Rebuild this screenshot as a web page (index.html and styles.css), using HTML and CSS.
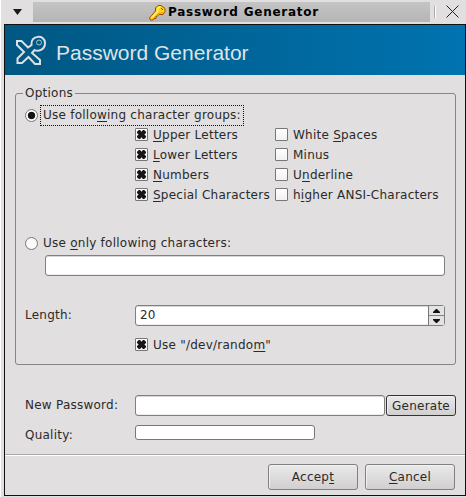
FILE: index.html
```html
<!DOCTYPE html>
<html lang="en">
<head>
<meta charset="utf-8">
<title>Password Generator</title>
<link rel="stylesheet" href="styles.css">
</head>
<body>
<div class="window">
  <div class="titlebar">
    <svg class="menu-arrow" width="10" height="6"><path d="M0 0h9L4.500 6z" fill="#1a1a1a"/></svg>
    <div class="caption">
      <svg width="17" height="17" viewBox="0 0 17 17"><path d="M9 1.500h3l4 3 0 3-2 3-4 0-2 2-1 0 0 2-2 0-1 1.500-2.500 0-1-2 6-7 0-3z" fill="#ffd51c" stroke="#a44800"/><path d="M2.500 13.500L9 7V4l2-1.500" fill="none" stroke="#fff27a" stroke-width="1.2"/><path d="M4 15l6-6 4 0" fill="none" stroke="#e89b00"/><path d="M12 4l2 2" stroke="#814000"/></svg>
      <span class="caption-text">Password Generator</span>
    </div>
    <span class="grip"></span>
    <svg class="close" width="13" height="13"><path d="M.5 .5l12 12M12.500 .5l-12 12" stroke="#222" fill="none"/></svg>
  </div>
  <div class="dialog">
    <header class="banner">
      <svg width="32" height="32" viewBox="0 0 32 32" fill="none" stroke="#dedfe3" stroke-width="2"><path d="M2 6H6.500L13 12.500L16.500 10C15 0 30 -1 30 8C30 15 23 17 19.500 15L17 18L25 25V29H20L13.500 22L7 28H2.500V23.500L9 17L2 10Z"/><circle cx="24" cy="7.500" r="2.500" stroke-width="1" stroke="#a9c4d5"/></svg>
      <h1>Password Generator</h1>
    </header>
    <main class="content">
      <fieldset class="options">
        <legend>Options</legend>
        <div class="row radio-row"><span class="radio on"></span><span class="focus"><span>Use follo<u>w</u>ing character groups:</span></span></div>
        <div class="checks">
          <div class="row"><span class="box on"></span><span><u>U</u>pper Letters</span></div>
          <div class="row"><span class="box"></span><span>White <u>S</u>paces</span></div>
          <div class="row"><span class="box on"></span><span><u>L</u>ower Letters</span></div>
          <div class="row"><span class="box"></span><span>Minus</span></div>
          <div class="row"><span class="box on"></span><span><u>N</u>umbers</span></div>
          <div class="row"><span class="box"></span><span>U<u>n</u>derline</span></div>
          <div class="row"><span class="box on"></span><span><u>S</u>pecial Characters</span></div>
          <div class="row"><span class="box"></span><span>h<u>i</u>gher ANSI-Characters</span></div>
        </div>
        <div class="row only-row"><span class="radio"></span><span>Use <u>o</u>nly following characters:</span></div>
        <div class="field custom"></div>
        <div class="length-row">
          <span class="label">Length:</span>
          <div class="field spin"><span class="value">20</span>
            <span class="arrows"><i><svg width="7" height="4"><path d="M0 4V3L3 0h1l3 3v1z"/></svg></i><i><svg width="7" height="4"><path d="M0 0v1l3 3h1l3-3V0z"/></svg></i></span>
          </div>
        </div>
        <div class="row random"><span class="box on"></span><span>Use "/dev/rando<u>m</u>"</span></div>
      </fieldset>
      <div class="result"><span class="label">New Password:</span><div class="field password"></div><button class="generate">Generate</button></div>
      <div class="quality"><span class="label">Quality:</span><div class="meter"></div></div>
    </main>
    <footer class="actions"><button>Accep<u>t</u></button><button><u>C</u>ancel</button></footer>
  </div>
</div>
</body>
</html>
```
FILE: styles.css
```css
* { box-sizing: border-box; }
body { margin: 0; background: #e1dfe0; color: #2a2a2a; font: 12px/20px "DejaVu Sans", sans-serif; letter-spacing: .24px; }
.window { width: 466px; height: 497px; border-left: 1px solid #fff; overflow: hidden; }
.titlebar { display: flex; height: 24px; padding-top: 2px; }
.menu-arrow { margin: 7px 10px 0 12px; }
.caption { display: flex; align-items: center; justify-content: center; gap: 2px; width: 397px; height: 20px; padding-left: 5px; background: linear-gradient(#c4c4c4, #b5b5b5); color: #000; font-weight: bold; font-size: 12px; }
.caption-text { letter-spacing: .75px; white-space: nowrap; }
.grip { width: 2px; height: 12px; margin: 4px 10px 0 4px; border-left: 1px solid #aaa; background: #fff; }
.close { margin-top: 3px; }
.dialog { width: 462px; height: 472px; margin-left: 3px; border: 1px solid #111; }
.banner { display: flex; align-items: center; height: 50px; padding-left: 10px; background: linear-gradient(90deg, #005782, #0073b0); }
.banner > svg { margin-top: 2px; }
.banner h1 { margin: 6px 0 0 9px; color: #dfe3e7; font: 21px/24px "Liberation Sans", sans-serif; letter-spacing: 0; }
.content { height: 379px; padding: 8px 9px 0 10px; }
.options { height: 282px; margin: 0; padding: 2px 9px 0; border: 1px solid #858585; border-radius: 3px; min-width: 0; }
legend { padding: 0 2px; margin-left: -2px; height: 20px; }
u { text-decoration: underline; text-decoration-skip-ink: none; text-decoration-thickness: 1px; text-underline-offset: 2px; }
.row { display: flex; align-items: center; gap: 5px; height: 20px; white-space: nowrap; }
.radio { flex: none; width: 13px; height: 13px; border: 1px solid #777; border-radius: 50%; background: #fafafa; }
.radio.on { background: radial-gradient(circle, #151515 0 3.4px, #fafafa 4.1px); }
.focus { height: 21px; width: 204px; margin-left: -3px; padding: 0 2px; border: 1px dotted #111; line-height: 18px; }
.checks { display: grid; grid-template-columns: 140px 1fr; margin-left: 110px; }
.box { display: flex; align-items: center; justify-content: center; flex: none; width: 13px; height: 13px; margin-bottom: 1px; border: 1px solid #777; border-radius: 1px; background: linear-gradient(#fff, #f1f1f1); }
.box.on::before { content: ""; width: 9px; height: 9px; background: #161616; clip-path: polygon(0 20%, 20% 0, 34% 0, 50% 20%, 66% 0, 80% 0, 100% 20%, 100% 32%, 82% 50%, 100% 68%, 100% 80%, 80% 100%, 66% 100%, 50% 80%, 34% 100%, 20% 100%, 0 80%, 0 68%, 18% 50%, 0 32%); }
.only-row { margin-top: 28px; }
.field { height: 21px; border: 1px solid #808080; border-radius: 3px; background: #fff; box-shadow: inset 0 1px #d8d8d8, inset 0 -1px #ededed; }
.custom { margin: 2px 0 0 20px; width: 400px; }
.length-row { display: flex; margin-top: 29px; }
.label { flex: none; width: 110px; }
.spin { display: flex; width: 310px; }
.value { flex: 1; padding-left: 4px; line-height: 18px; }
.arrows { width: 16px; border-left: 1px solid #777; background: #e4e3e3; }
.arrows i { display: flex; align-items: center; justify-content: center; height: 9px; }
.arrows i + i { border-top: 1px solid #808080; height: 10px; }
.arrows svg { display: block; fill: #111; }
.random { margin: 9px 0 0 110px; }
.result { display: flex; margin: 30px 0 0 10px; }
.password { width: 250px; }
button { height: 26px; width: 90px; padding: 0; border: 1px solid #808080; border-radius: 3px; color: #2a2a2a; background: linear-gradient(#eae9e9, #d1cfd0); font: inherit; letter-spacing: .24px; box-shadow: inset 1px 1px #f1f1f1; }
.generate { width: 70px; height: 21px; margin-left: 1px; border-color: #333; line-height: 18px; }
.quality { display: flex; margin: 9px 0 0 10px; }
.meter { width: 180px; height: 15px; border: 1px solid #777; border-radius: 3px; background: #fff; }
.actions { display: flex; justify-content: flex-end; gap: 7px; height: 41px; padding: 9px 10px 0; border-top: 1px solid #aaa; box-shadow: inset 0 1px #fff; }
```
